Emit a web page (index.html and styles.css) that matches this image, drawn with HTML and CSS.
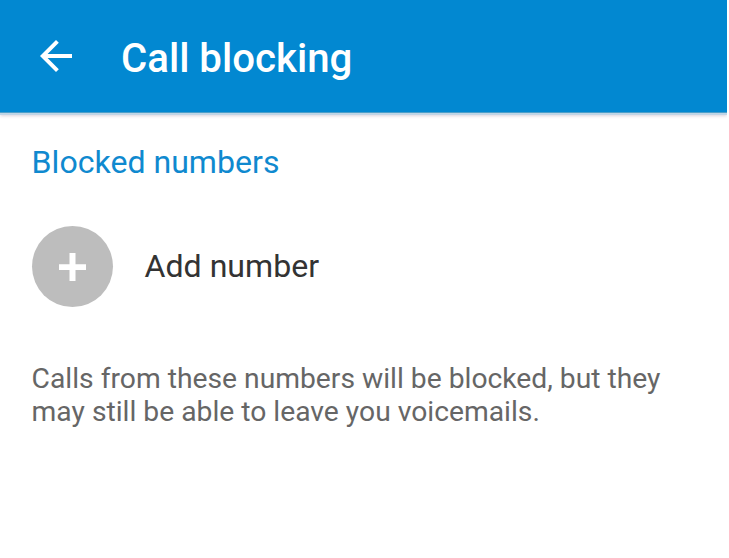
FILE: index.html
```html
<!DOCTYPE html>
<html lang="en">
<head>
<meta charset="utf-8">
<title>Call blocking</title>
<link rel="stylesheet" href="styles.css">
</head>
<body>
<div class="screen">
  <header class="bar">
    <svg class="back" viewBox="0 0 32 32" width="32" height="32" aria-hidden="true"><path d="M32 14H7.6L18.8 2.8 16 0 0 16l16 16 2.8-2.8L7.6 18H32z"/></svg>
    <h1 class="title">Call blocking</h1>
  </header>
  <main class="content">
    <h2 class="section">Blocked numbers</h2>
    <div class="add">
      <span class="circle"><svg viewBox="0 0 27 28" width="27" height="28" aria-hidden="true"><path d="M10.500 0h6v11.200H27v5.800H16.500V28h-6V17H0v-5.800h10.500z"/></svg></span>
      <span class="label">Add number</span>
    </div>
    <p class="note">Calls from these numbers will be blocked, but they<br>may still be able to leave you voicemails.</p>
  </main>
</div>
</body>
</html>
```
FILE: styles.css
```css
body {
  margin: 0;
  background: #fff;
  font-family: Roboto, "Liberation Sans", sans-serif;
}
.screen {
  width: 727px;
  height: 558px;
  overflow: hidden;
}
.bar {
  display: flex;
  align-items: center;
  box-sizing: border-box;
  height: 113px;
  padding: 0 0 0 40px;
  gap: 49px;
  background: #0288d1;
  border-bottom: 1px solid #4d9fc9;
  box-shadow: 0 2px 0 #c0d5e6, 0 3px 3px rgba(90, 60, 100, 0.22);
}
.back {
  fill: #fff;
}
.title {
  margin: 5px 0 0;
  font-size: 40.2px;
  font-weight: 500;
  line-height: 48px;
  color: #fff;
}
.content {
  padding: 29px 31.6px 0;
}
.section {
  margin: 0;
  font-size: 32.1px;
  font-weight: 400;
  line-height: 40px;
  color: #0f89cf;
}
.add {
  display: flex;
  align-items: center;
  gap: 32px;
  margin-top: 44px;
}
.circle {
  display: flex;
  align-items: center;
  justify-content: center;
  width: 81px;
  height: 81px;
  border-radius: 50%;
  background: #bdbdbd;
}
.circle svg {
  fill: #fff;
}
.label {
  margin-top: -2px;
  font-size: 32.1px;
  line-height: 40px;
  color: #333;
}
.note {
  margin: 55px 0 0;
  font-size: 28.25px;
  line-height: 33px;
  color: #666;
  white-space: nowrap;
}
```
